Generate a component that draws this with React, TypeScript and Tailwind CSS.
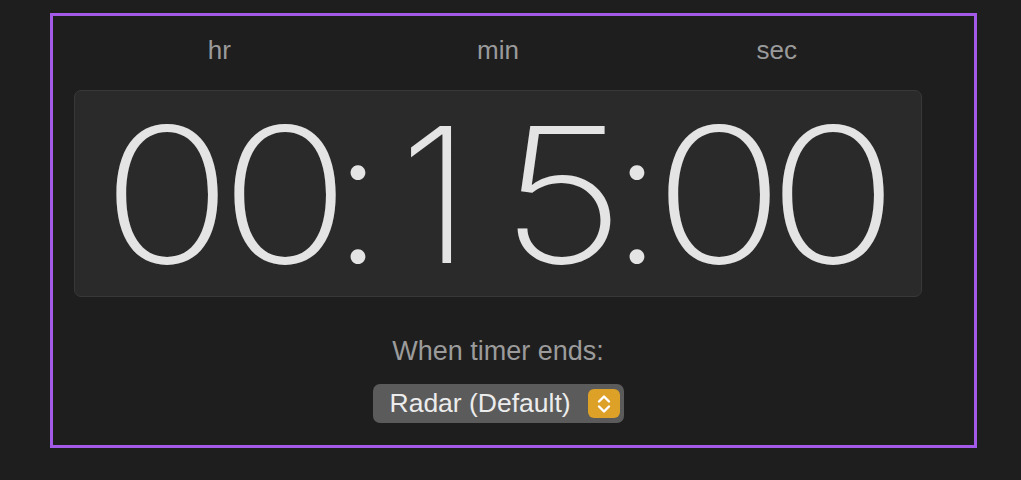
const sans = "font-['Liberation_Sans',Arial,sans-serif]";

function Stepper() {
  return (
    <span className="flex h-[29px] w-[32px] items-center justify-center rounded-[6px] bg-[#dca126]">
      <svg width="14" height="22" viewBox="0 0 14 22" fill="none" stroke="white" strokeWidth="2.4" strokeLinecap="round" strokeLinejoin="round">
        <polyline points="2,8.5 7,3.5 12,8.5" />
        <polyline points="2,13.5 7,18.5 12,13.5" />
      </svg>
    </span>
  );
}

// each glyph sits centred in its own column, like the native clock face
function Digit({ ch, className = "", wide = true }: { ch: string; className?: string; wide?: boolean }) {
  return (
    <span className={`flex w-[104px] shrink-0 justify-center ${className}`}>
      <span className={`inline-block ${wide ? "scale-x-[1.15] tracking-[-16px]" : "tracking-[-12px]"}`}>{ch}</span>
    </span>
  );
}
function Colon({ className = "" }: { className?: string }) {
  return (
    <span className={`flex w-[40px] shrink-0 justify-center ${className}`}>
      <span className="inline-block tracking-[-12px]">:</span>
    </span>
  );
}

export default function App() {
  return (
    <div className="h-[480px] w-[1021px] overflow-hidden bg-[#1e1e1e] pt-[13px] pl-[50px]">
      <div className="flex h-[435px] w-[927px] flex-col items-center border-[3px] border-[#a35ae6] pl-[21px] pr-[52px]">
        {/* unit labels */}
        <div className={`mt-[19px] grid w-full grid-cols-3 px-[6px] text-[26px] leading-[30px] text-[#9a9a9a] ${sans}`}>
          <div className="text-center">hr</div>
          <div className="text-center">min</div>
          <div className="text-center">sec</div>
        </div>

        {/* time display */}
        <div className="mt-[25px] flex h-[207px] w-full items-center rounded-[7px] border border-[#383838] bg-[#2a2a2a] pl-[31px]">
          <div className="flex pt-[2px] font-['Inter',sans-serif] text-[188px] font-extralight leading-none text-[#e4e4e4]">
            <Digit ch="0" />
            <Digit ch="0" className="ml-[14px]" />
            <Colon className="ml-[4px]" />
            <Digit ch="1" wide={false} className="ml-[5px]" />
            <Digit ch="5" className="ml-[20px]" />
            <Colon className="ml-[6px]" />
            <Digit ch="0" className="ml-[7px]" />
            <Digit ch="0" className="ml-[10px]" />
          </div>
        </div>

        <div className={`mt-[39px] text-[27px] leading-[30px] text-[#9b9b9b] ${sans}`}>When timer ends:</div>

        {/* sound picker */}
        <button className={`mt-[18px] flex h-[39px] w-[251px] items-center justify-between rounded-[7px] bg-[#5b5b5b] pl-[17px] pr-[4px] text-[26.5px] text-[#ececec] ${sans}`}>
          <span>Radar (Default)</span>
          <Stepper />
        </button>
      </div>
    </div>
  );
}
